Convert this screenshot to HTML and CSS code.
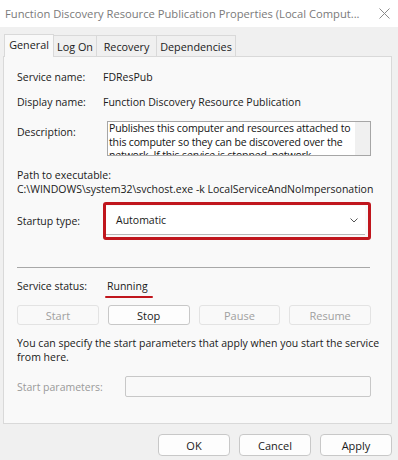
FILE: index.html
```html
<!DOCTYPE html>
<html lang="en">
  <head>
    <meta charset="utf-8" />
    <title>Service Properties</title>
    <link rel="stylesheet" href="styles.css">
  </head>
  <body>
    <div class="title-bar">
      <span class="title">Function Discovery Resource Publication Properties (Local Comput...</span>
      <svg class="close" width="11" height="11" viewBox="0 0 11 11">
        <path d="M0.5 0.5 L10.5 10.5 M10.5 0.5 L0.5 10.5" stroke="#8a8a8a" stroke-width="1" fill="none" />
      </svg>
    </div>

    <div class="tabs">
      <div class="tab active tab-general">General</div>
      <div class="tab tab-logon">Log On</div>
      <div class="tab tab-recovery">Recovery</div>
      <div class="tab tab-deps">Dependencies</div>
    </div>

    <div class="panel">
      <div class="row">
        <div class="label">Service name:</div>
        <div class="value">FDResPub</div>
      </div>
      <div class="row row-display">
        <div class="label">Display name:</div>
        <div class="value">Function Discovery Resource Publication</div>
      </div>
      <div class="row row-desc">
        <div class="label">Description:</div>
        <div class="desc-box">
          <div class="desc-text">Publishes this computer and resources attached to this computer so they can be discovered over the network.  If this service is stopped, network resources will no longer be published.</div>
          <div class="scrollbar"></div>
        </div>
      </div>

      <div class="path-label">Path to executable:</div>
      <div class="path-value">C:\WINDOWS\system32\svchost.exe -k LocalServiceAndNoImpersonation</div>

      <div class="row row-startup">
        <div class="label">Startup type:</div>
        <div class="highlight">
          <div class="select">
            <span>Automatic</span>
            <svg width="8" height="5" viewBox="0 0 8 5">
              <polyline points="0.5,0.5 4,4 7.5,0.5" stroke="#555" stroke-width="1" fill="none" />
            </svg>
          </div>
        </div>
      </div>

      <div class="separator"></div>

      <div class="row row-status">
        <div class="label">Service status:</div>
        <div class="status">Running</div>
      </div>

      <div class="service-buttons">
        <button class="btn" disabled>Start</button>
        <button class="btn">Stop</button>
        <button class="btn" disabled>Pause</button>
        <button class="btn" disabled>Resume</button>
      </div>

      <p class="hint">You can specify the start parameters that apply when you start the service from here.</p>

      <div class="row row-params">
        <div class="label muted">Start parameters:</div>
        <div class="params-input"></div>
      </div>
    </div>

    <div class="dialog-buttons">
      <button class="btn">OK</button>
      <button class="btn">Cancel</button>
      <button class="btn">Apply</button>
    </div>
  </body>
</html>
```

FILE: styles.css
```css
body {
  margin: 0;
  background-color: #f0f0f0;
  font-family: "Segoe UI", "Open Sans", sans-serif;
  font-size: 10.5px;
  color: #1a1a1a;
  width: 398px;
  height: 460px;
  overflow: hidden;
}
.title-bar {
  height: 27px;
  background-color: #ffffff;
  display: flex;
  align-items: center;
  justify-content: space-between;
  padding: 0 8px 0 5px;
}
.title {
  font-size: 11.2px;
  color: #7a7a7a;
  white-space: nowrap;
}
.tabs {
  display: flex;
  padding-left: 4px;
  margin-top: 7px;
  height: 22px;
  align-items: flex-end;
}
.tab {
  height: 21px;
  line-height: 21px;
  padding: 0;
  text-align: center;
  font-size: 10.8px;
  border: 1px solid #d9d9d9;
  border-bottom: none;
  border-left: none;
  background-color: #f0f0f0;
  box-sizing: border-box;
}
.tab.active {
  height: 23px;
  line-height: 20px;
  border-left: 1px solid #d9d9d9;
  background-color: #f9f9f9;
  margin-bottom: -1px;
  position: relative;
  z-index: 1;
}
.tab-general {
  width: 50px;
}
.tab-logon {
  width: 43px;
}
.tab-recovery {
  width: 60px;
}
.tab-deps {
  width: 79px;
}
.panel {
  margin: 0 6px 0 3px;
  height: 368px;
  box-sizing: border-box;
  background-color: #f9f9f9;
  border: 1px solid #d9d9d9;
  padding: 12px 20px 0 13px;
}
.row {
  display: flex;
  align-items: flex-start;
  line-height: 16px;
}
.label {
  width: 86px;
  flex-shrink: 0;
  white-space: nowrap;
}
.row-display {
  margin-top: 9px;
}
.row-desc {
  margin-top: 11px;
}
.row-desc .label {
  width: 90px;
  padding-top: 3px;
}
.desc-box {
  width: 266px;
  height: 35px;
  box-sizing: border-box;
  border: 1px solid #a6a6a6;
  background-color: #ffffff;
  display: flex;
  overflow: hidden;
}
.desc-text {
  flex: 1;
  padding: 0 0 0 1px;
  line-height: 13.5px;
  letter-spacing: -0.15px;
  color: #111;
}
.scrollbar {
  width: 15px;
  background-color: #f0f0f0;
}
.path-label {
  margin-top: 12px;
  line-height: 14px;
}
.path-value {
  line-height: 14px;
  white-space: nowrap;
}
.row-startup {
  margin-top: 6px;
  align-items: center;
}
.highlight {
  width: 275px;
  height: 38px;
  box-sizing: border-box;
  border: 3px solid #c0161d;
  border-radius: 3px;
  padding: 1px 3px 0 0;
}
.select {
  height: 28px;
  background-color: #ffffff;
  border-bottom: 1px solid #b8b8b8;
  display: flex;
  align-items: center;
  justify-content: space-between;
  padding: 0 7px 0 10px;
}
.separator {
  margin: 27px 1px 0 0;
  height: 1px;
  background-color: #a8a8a8;
}
.row-status {
  margin-top: 10px;
}
.status {
  position: relative;
  padding-left: 4px;
}
.status::after {
  content: "";
  position: absolute;
  left: 2px;
  width: 48px;
  bottom: -4px;
  height: 2px;
  background-color: #c0161d;
  border-radius: 1px;
}
.service-buttons {
  margin-top: 11px;
  display: flex;
  gap: 9px;
}
.btn {
  font-family: inherit;
  font-size: 11px;
  color: #1a1a1a;
  height: 20px;
  width: 82px;
  padding: 0;
  background-color: #fdfdfd;
  border: 1px solid #c8c8c8;
  border-radius: 3px;
}
.btn:disabled {
  color: #a0a0a0;
  background-color: #f9f9f9;
  border-color: #e3e3e3;
}
.hint {
  margin: 11px -14px 0 0;
  line-height: 14px;
}
.row-params {
  margin-top: 12px;
  align-items: center;
}
.muted {
  color: #999;
}
.params-input {
  margin-left: 22px;
  width: 248px;
  height: 21px;
  box-sizing: border-box;
  border: 1px solid #c8c8c8;
  border-radius: 2px;
  background-color: #f9f9f9;
}
.dialog-buttons {
  display: flex;
  justify-content: flex-end;
  gap: 9px;
  margin: 10px 6px 0 0;
}
.dialog-buttons .btn {
  width: 72px;
  height: 22px;
  border-radius: 4px;
}
```
